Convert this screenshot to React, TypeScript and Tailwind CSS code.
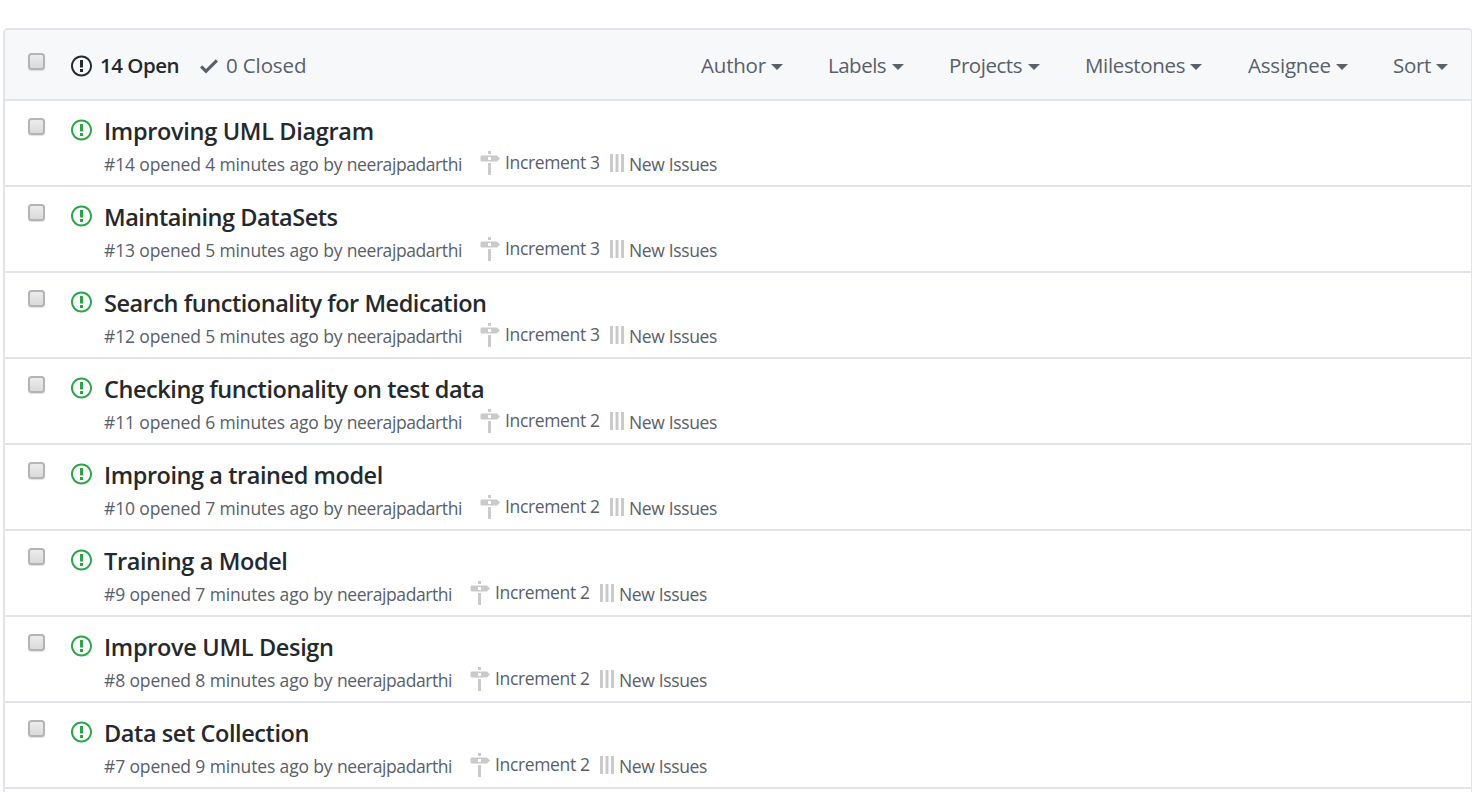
const ISSUE =
  "M7 2.3c3.14 0 5.7 2.56 5.7 5.7s-2.56 5.7-5.7 5.7A5.71 5.71 0 0 1 1.3 8c0-3.14 2.56-5.7 5.7-5.7zM7 1C3.14 1 0 4.14 0 8s3.14 7 7 7 7-3.14 7-7-3.14-7-7-7zm1 3H6v5h2V4zm0 6H6v2h2v-2z";

const issues = [
  { id: 14, title: "Improving UML Diagram", mins: 4, inc: 3, tracking: "tracking-[-0.32px]" },
  { id: 13, title: "Maintaining DataSets", mins: 5, inc: 3, tracking: "tracking-[-0.46px]" },
  { id: 12, title: "Search functionality for Medication", mins: 5, inc: 3, tracking: "tracking-[-0.46px]" },
  { id: 11, title: "Checking functionality on test data", mins: 6, inc: 2, tracking: "tracking-[-0.43px]" },
  { id: 10, title: "Improing a trained model", mins: 7, inc: 2, tracking: "tracking-[-0.44px]" },
  { id: 9, title: "Training a Model", mins: 7, inc: 2, tracking: "tracking-[-0.38px]" },
  { id: 8, title: "Improve UML Design", mins: 8, inc: 2, tracking: "tracking-[-0.33px]" },
  { id: 7, title: "Data set Collection", mins: 9, inc: 2, tracking: "tracking-[-0.42px]" },
];

const filters = [
  { label: "Author", width: "w-[127px]", text: "w-[70px] tracking-[-0.2px]" },
  { label: "Labels", width: "w-[121px]", text: "w-[64px] tracking-[-0.5px]" },
  { label: "Projects", width: "w-[136px]", text: "w-[79px] tracking-[-0.45px]" },
  { label: "Milestones", width: "w-[163px]", text: "w-[105px] tracking-[-0.35px]" },
  { label: "Assignee", width: "w-[145px]", text: "w-[88px] tracking-[-0.2px]" },
  { label: "Sort", width: "w-[78px]", text: "w-[43px] tracking-[-0.3px]" },
];

function IssueIcon({ className }: { className: string }) {
  return (
    <svg viewBox="0 0 14 16" className={`h-6 w-[21px] shrink-0 fill-current ${className}`}>
      <path d={ISSUE} />
    </svg>
  );
}

function Checkbox({ className }: { className: string }) {
  return (
    <span
      className={`block h-[17px] w-[17px] shrink-0 rounded-[3.5px] border-2 border-[#b4b4b4] bg-linear-to-b from-[#ececec] to-[#dadada] shadow-[0_1px_1px_rgba(0,0,0,0.12)] ${className}`}
    />
  );
}

export default function App() {
  return (
    <div className="h-[792px] w-full overflow-hidden bg-white pt-7 pl-[3px] font-['Open_Sans',sans-serif] whitespace-nowrap">
      <div className="h-[800px] w-[1470px] rounded-[5px] border-2 border-[#e1e4e8]">
        <div className="flex h-[71px] items-start rounded-t-[3px] border-b-2 border-[#e1e4e8] bg-[#f6f8fa] text-[20.5px] leading-[30px] text-[#586069]">
          <Checkbox className="mt-[23px] ml-[23px]" />
          <IssueIcon className="mt-6 ml-[26px] text-[#24292e]" />
          <span className="mt-5 ml-2 w-[100px] font-semibold tracking-[-0.5px] text-[#24292e]">14 Open</span>
          <svg viewBox="0 0 12 16" className="mt-6 h-6 w-[18px] fill-current">
            <path d="M12 5l-8 8-4-4 1.5-1.5L4 10l6.5-6.5L12 5z" />
          </svg>
          <span className="mt-5 ml-2 tracking-[-0.12px]">0 Closed</span>
          <div className="mt-5 ml-auto flex">
            {filters.map((f) => (
              <div key={f.label} className={`flex ${f.width}`}>
                <span className={f.text}>{f.label}</span>
                <span className="mt-[14px] h-0 w-0 border-x-[6px] border-t-[6px] border-x-transparent border-t-[#586069]" />
              </div>
            ))}
          </div>
        </div>
        {issues.map((it) => (
          <div key={it.id} className="flex h-[86px] items-start border-b-2 border-[#e1e4e8]">
            <Checkbox className="mt-[17px] ml-[23px]" />
            <IssueIcon className="mt-[17px] ml-[26px] text-[#28a745]" />
            <div className="ml-3">
              <div className={`mt-3 h-[37px] text-[23.5px] leading-9 font-semibold text-[#24292e] ${it.tracking}`}>
                {it.title}
              </div>
              <div className="flex h-7 text-[17.5px] leading-7 text-[#586069]">
                <div className={it.id > 9 ? "w-[375px]" : "w-[365px]"}>
                  <span className="tracking-[-0.14px]">
                    #{it.id} opened {it.mins} minutes ago by{" "}
                  </span>
                  <span className="tracking-[-0.42px]">neerajpadarthi</span>
                </div>
                <svg viewBox="0 0 14 16" className="mt-[1px] h-6 w-[21px] fill-[#cacaca]">
                  <path d="M8 2H6V0h2v2zm4 5H2c-.55 0-1-.45-1-1V4c0-.55.45-1 1-1h10l2 2-2 2zM8 4H6v2h2V4zM6 16h2V8H6v8z" />
                </svg>
                <span className="-mt-[2px] ml-[5px] w-[105px] tracking-[-0.35px]">Increment {it.inc}</span>
                <svg viewBox="0 0 14 18" className="mt-1 h-[18px] w-[14px] fill-[#cacaca]">
                  <path d="M0 0h3v18H0zM5.5 0h3v18h-3zM11 0h3v18h-3z" />
                </svg>
                <span className="ml-[5px] tracking-[-0.35px]">New Issues</span>
              </div>
            </div>
          </div>
        ))}
      </div>
    </div>
  );
}
